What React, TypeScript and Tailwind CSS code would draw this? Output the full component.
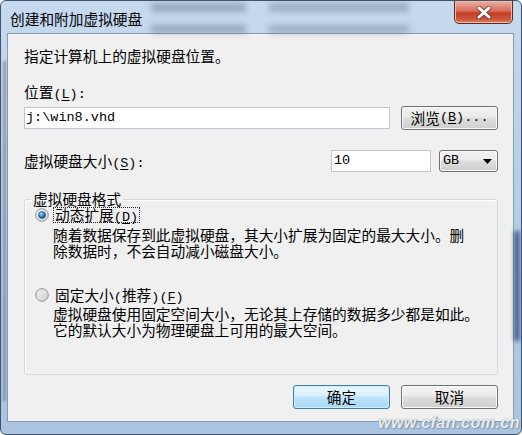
import React from "react";

// half-width latin in the SimSun-like dialog font
const Lat = ({ children }: { children: React.ReactNode }) => (
  <span className="font-['Liberation_Mono',monospace] text-[13.5px] leading-[12px]">{children}</span>
);

const Key = ({ k }: { k: string }) => (
  <Lat>
    (<span className="underline underline-offset-2">{k}</span>)
  </Lat>
);

const Radio = ({ checked }: { checked?: boolean }) => (
  <svg width="14" height="14" viewBox="0 0 14 14" className="shrink-0">
    <defs>
      <linearGradient id={checked ? "rgOn" : "rgOff"} x1="0" y1="0" x2="1" y2="1">
        <stop offset="0" stopColor={checked ? "#f4f4f4" : "#f2f2f2"} />
        <stop offset="1" stopColor={checked ? "#d6d6d6" : "#cfcfcf"} />
      </linearGradient>
      <radialGradient id="dot" cx="0.4" cy="0.35" r="0.7">
        <stop offset="0" stopColor="#b9e3fb" />
        <stop offset="0.45" stopColor="#3a8bc8" />
        <stop offset="1" stopColor="#123f6b" />
      </radialGradient>
    </defs>
    <circle cx="7" cy="7" r="6.3" fill={`url(#${checked ? "rgOn" : "rgOff"})`} stroke="#8b9197" strokeWidth="1" />
    {checked && <circle cx="7" cy="7" r="3.6" fill="url(#dot)" stroke="#2b5f8a" strokeWidth="0.6" />}
  </svg>
);

const btn =
  "flex h-[24px] w-[97px] items-center justify-center rounded-[3px] border border-[#707070] bg-[linear-gradient(180deg,#f2f2f2_0%,#ebebeb_45%,#dddddd_50%,#cfcfcf_100%)] shadow-[inset_0_0_0_1px_#fbfbfb]";

export default function App() {
  return (
    <div className="relative flex h-[435px] w-[522px] flex-col overflow-hidden rounded-[6px] border border-[#3f536b] bg-[linear-gradient(180deg,#c6daef_0%,#b9d0e9_35%,#aac4e1_100%)] font-['Noto_Sans_CJK_SC',sans-serif] text-[14.7px] leading-4 text-black">
      {/* glass smudges behind the frame */}
      <div className="pointer-events-none absolute left-[150px] top-[2px] h-[9px] w-[95px] bg-[#4d5e74]/40 blur-[3px]" />
      <div className="pointer-events-none absolute left-[268px] top-[2px] h-[9px] w-[140px] bg-[#4d5e74]/35 blur-[3px]" />
      <div className="pointer-events-none absolute left-[150px] top-[24px] h-[8px] w-[95px] bg-[#4d5e74]/40 blur-[3px]" />
      <div className="pointer-events-none absolute left-[268px] top-[24px] h-[8px] w-[140px] bg-[#4d5e74]/35 blur-[3px]" />
      <div className="pointer-events-none absolute left-[2px] top-[60px] h-[340px] w-[3px] bg-[#56677c]/50 blur-[1px]" />
      <div className="pointer-events-none absolute right-[1px] top-[230px] h-[110px] w-[6px] bg-[#1d3470]/70 blur-[2px]" />

      {/* title bar */}
      <div className="relative h-[32px] shrink-0">
        <div className="pl-[9px] pt-[10px]">创建和附加虚拟硬盘</div>
        <button
          type="button"
          className="absolute left-[453px] top-[-1px] flex h-[24px] w-[59px] items-center justify-center rounded-b-[5px] border border-[#5e2a22] bg-[linear-gradient(180deg,#eab0a2_0%,#d86e5c_45%,#c43d26_55%,#cf5a3f_85%,#e38a6d_100%)] shadow-[inset_0_0_0_1px_#f0b9a9]"
        >
          <svg width="16" height="13" viewBox="0 0 16 13">
            <path d="M3 2 L13 11 M13 2 L3 11" stroke="#5a1e16" strokeWidth="5" strokeLinecap="round" opacity="0.55" />
            <path d="M3 2 L13 11 M13 2 L3 11" stroke="#ffffff" strokeWidth="3" strokeLinecap="round" />
          </svg>
        </button>
      </div>

      {/* client area */}
      <div className="mb-[8px] ml-[6px] mr-[7px] border border-[#8a9bb0] bg-[#f0f0f0] pb-[12px] pl-[16px] pr-[15px] pt-[14px]">
        <div className="h-4">指定计算机上的虚拟硬盘位置。</div>

        <div className="mt-[20px] h-4">
          位置<Key k="L" />
          <Lat>:</Lat>
        </div>
        <div className="mt-[6px] flex h-[24px] items-center justify-between">
          <div className="flex h-[22px] w-[366px] items-center border border-[#c0c6cd] bg-white pl-[1px]">
            <Lat>j:\win8.vhd</Lat>
          </div>
          <button type="button" className={btn}>
            浏览<Key k="B" />
            <Lat>...</Lat>
          </button>
        </div>

        <div className="mt-[20px] flex h-[22px] items-center justify-between">
          <div>
            虚拟硬盘大小<Key k="S" />
            <Lat>:</Lat>
          </div>
          <div className="flex items-center gap-[8px]">
            <div className="flex h-[22px] w-[100px] items-center border border-[#c0c6cd] bg-white pl-[2px]">
              <Lat>10</Lat>
            </div>
            <div className="flex h-[22px] w-[59px] items-center justify-between rounded-[3px] border border-[#707070] bg-[linear-gradient(180deg,#f2f2f2_0%,#ebebeb_45%,#dddddd_50%,#cfcfcf_100%)] pl-[3px] pr-[5px] shadow-[inset_0_0_0_1px_#fbfbfb]">
              <Lat>GB</Lat>
              <svg width="9" height="5" viewBox="0 0 9 5">
                <path d="M0 0 H9 L4.5 5 Z" fill="#000" />
              </svg>
            </div>
          </div>
        </div>

        <fieldset className="mt-[19px] rounded-[3px] border border-[#d3d9df] pb-[36px] shadow-[inset_1px_1px_0_#ffffff]">
          <legend className="ml-[6px] h-4 px-[2px]">虚拟硬盘格式</legend>

          <div className="pl-[10px]">
            <div className="flex h-[16px] items-center gap-[4px]">
              <Radio checked />
              <span className="h-[16px] border border-dotted border-[#222] px-px leading-[14px]">
                动态扩展<Key k="D" />
              </span>
            </div>
            <div className="mt-[4px] pl-[18px]">
              <div className="h-4">随着数据保存到此虚拟硬盘，其大小扩展为固定的最大大小。删</div>
              <div className="h-4">除数据时，不会自动减小磁盘大小。</div>
            </div>

            <div className="mt-[28px] flex h-[16px] items-center gap-[4px]">
              <Radio />
              <span className="h-[16px] border border-transparent px-px leading-[14px]">
                固定大小<Lat>(</Lat>推荐<Lat>)</Lat>
                <Key k="F" />
              </span>
            </div>
            <div className="mt-[3px] pl-[18px]">
              <div className="h-4">虚拟硬盘使用固定空间大小，无论其上存储的数据多少都是如此。</div>
              <div className="h-4">它的默认大小为物理硬盘上可用的最大空间。</div>
            </div>
          </div>
        </fieldset>

        <div className="mt-[10px] flex justify-end gap-[11px]">
          <button
            type="button"
            className="flex h-[24px] w-[97px] items-center justify-center rounded-[3px] border border-[#3c7fb1] bg-[linear-gradient(180deg,#eaf6fd_0%,#d9f0fc_45%,#bee6fd_50%,#a7d9f5_100%)] shadow-[inset_0_0_0_1px_#d2ecfa]"
          >
            确定
          </button>
          <button type="button" className={btn}>
            取消
          </button>
        </div>
      </div>

      {/* watermark */}
      <div className="pointer-events-none absolute bottom-[2px] right-[1px] font-['Liberation_Sans',sans-serif] text-[16px] font-bold italic leading-[18px] tracking-[0.5px] text-[#e9eef4] [text-shadow:0_0_1px_#6d7a88,1px_1px_1px_#8b97a5]">
        www.cfan.com.cn
      </div>
    </div>
  );
}
